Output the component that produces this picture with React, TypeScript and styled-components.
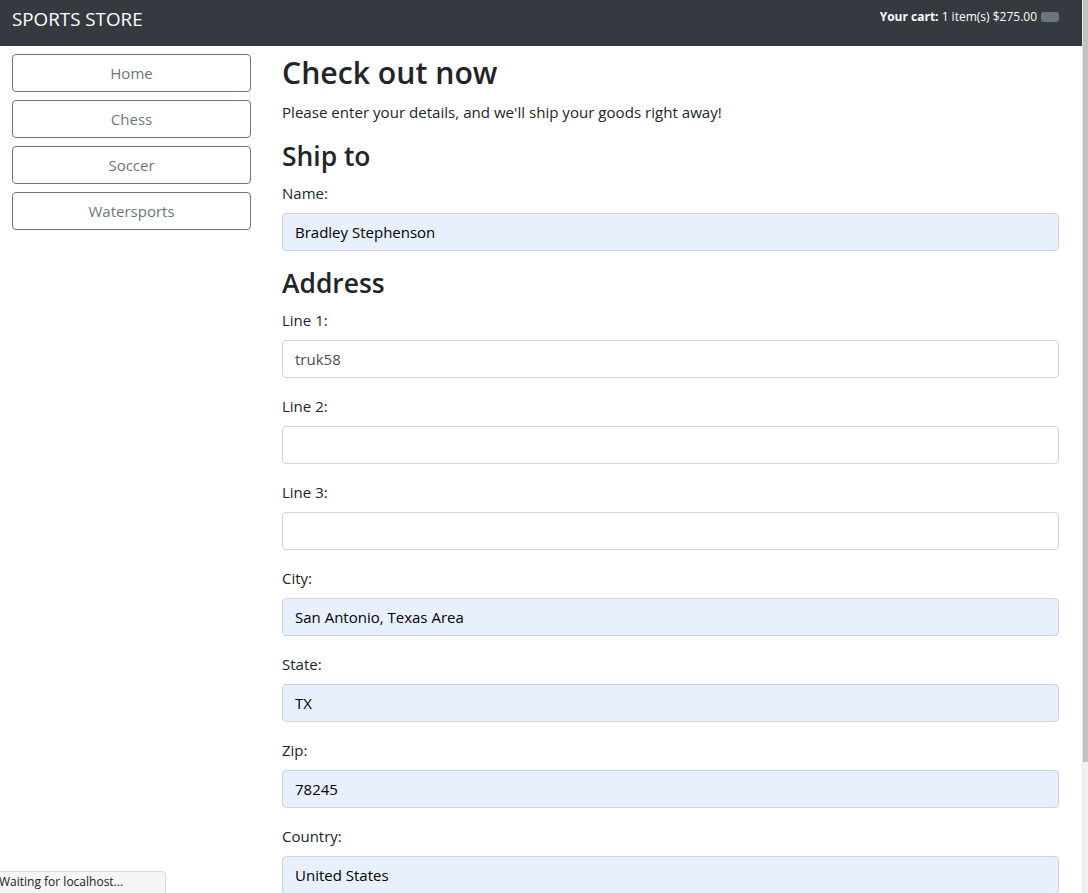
import styled, { createGlobalStyle } from "styled-components";

const GlobalStyle = createGlobalStyle`
  html, body {
    margin: 0;
    padding: 0;
    overflow: hidden;
    background: #fff;
  }
  body {
    font-family: "Open Sans", "Noto Sans", sans-serif;
    color: #212529;
  }
  * {
    box-sizing: border-box;
  }
`;

const Frame = styled.div`
  width: 1088px;
  height: 893px;
  display: flex;
  overflow: hidden;
  position: relative;
`;

const Viewport = styled.div`
  flex: 1;
  min-width: 0;
  overflow: hidden;
`;

const Navbar = styled.nav`
  height: 46px;
  background: #343a40;
  display: flex;
  justify-content: space-between;
  align-items: flex-start;
  padding: 0 23px 0 12px;
`;

const Brand = styled.div`
  color: #fff;
  font-size: 18.8px;
  line-height: 30px;
  padding-top: 4px;
`;

const Cart = styled.div`
  display: flex;
  align-items: center;
  gap: 4px;
  color: #fff;
  font-size: 12px;
  line-height: 18px;
  padding-top: 8px;
  b {
    font-weight: 700;
  }
`;

const CartButton = styled.button`
  width: 18px;
  height: 10px;
  padding: 0;
  border: none;
  border-radius: 3px;
  background: #6c757d;
`;

const Body = styled.div`
  display: flex;
  padding-top: 8px;
`;

const Sidebar = styled.aside`
  flex: 0 0 239px;
  margin-left: 12px;
  display: flex;
  flex-direction: column;
  gap: 8px;
`;

const NavButton = styled.button`
  height: 38px;
  background: #fff;
  border: 1px solid #6c757d;
  border-radius: 4px;
  color: #6c757d;
  font-family: inherit;
  font-size: 15px;
`;

const Main = styled.main`
  flex: 0 0 777px;
  margin-left: 31px;
`;

const Title = styled.h2`
  margin: 0 0 8px;
  font-size: 30.2px;
  font-weight: 600;
  line-height: 38px;
`;

const Lead = styled.p`
  margin: 0 0 16px;
  font-size: 15.1px;
  line-height: 24px;
`;

const Section = styled.h3`
  margin: 0 0 8px;
  font-size: 26.4px;
  font-weight: 600;
  line-height: 33px;
`;

const Group = styled.div`
  margin-bottom: 16px;
`;

const Label = styled.label`
  display: block;
  font-size: 15px;
  line-height: 24px;
  margin-bottom: 8px;
`;

const Input = styled.input<{ $filled?: boolean }>`
  display: block;
  width: 100%;
  height: 38px;
  padding: 6px 12px;
  font-family: inherit;
  font-size: 15px;
  color: ${(p) => (p.$filled ? "#000" : "#495057")};
  background: ${(p) => (p.$filled ? "#e8f0fe" : "#fff")};
  border: 1px solid #ced4da;
  border-radius: 4px;
  outline: none;
`;

const ScrollTrack = styled.div`
  flex: 0 0 6px;
  background: #f1f1f1;
  border-left: 1px solid #e6e6e6;
  display: flex;
  flex-direction: column;
`;

const ScrollThumb = styled.div`
  height: 762px;
  background: #c1c1c1;
`;

const StatusBar = styled.div`
  position: absolute;
  left: -8px;
  bottom: 0;
  width: 174px;
  height: 22px;
  padding: 0 6px;
  background: #f5f5f5;
  border: 1px solid #dadada;
  border-bottom: none;
  border-top-right-radius: 4px;
  font-family: "Open Sans", sans-serif;
  font-size: 12px;
  line-height: 20px;
  color: #202124;
`;

type Field = { label: string; value: string; filled?: boolean };

const shipFields: Field[] = [
  { label: "Name:", value: "Bradley Stephenson", filled: true },
];

const addressFields: Field[] = [
  { label: "Line 1:", value: "truk58" },
  { label: "Line 2:", value: "" },
  { label: "Line 3:", value: "" },
  { label: "City:", value: "San Antonio, Texas Area", filled: true },
  { label: "State:", value: "TX", filled: true },
  { label: "Zip:", value: "78245", filled: true },
  { label: "Country:", value: "United States", filled: true },
];

const categories = ["Home", "Chess", "Soccer", "Watersports"];

function FormField({ field }: { field: Field }) {
  return (
    <Group>
      <Label>{field.label}</Label>
      <Input $filled={field.filled} defaultValue={field.value} />
    </Group>
  );
}

export default function App() {
  return (
    <Frame>
      <GlobalStyle />
      <Viewport>
        <Navbar>
          <Brand>SPORTS STORE</Brand>
          <Cart>
            <span>
              <b>Your cart:</b> 1 item(s) $275.00
            </span>
            <CartButton />
          </Cart>
        </Navbar>
        <Body>
          <Sidebar>
            {categories.map((c) => (
              <NavButton key={c}>{c}</NavButton>
            ))}
          </Sidebar>
          <Main>
            <Title>Check out now</Title>
            <Lead>Please enter your details, and we'll ship your goods right away!</Lead>
            <Section>Ship to</Section>
            {shipFields.map((f) => (
              <FormField key={f.label} field={f} />
            ))}
            <Section>Address</Section>
            {addressFields.map((f) => (
              <FormField key={f.label} field={f} />
            ))}
          </Main>
        </Body>
      </Viewport>
      <ScrollTrack>
        <ScrollThumb />
      </ScrollTrack>
      <StatusBar>Waiting for localhost...</StatusBar>
    </Frame>
  );
}
